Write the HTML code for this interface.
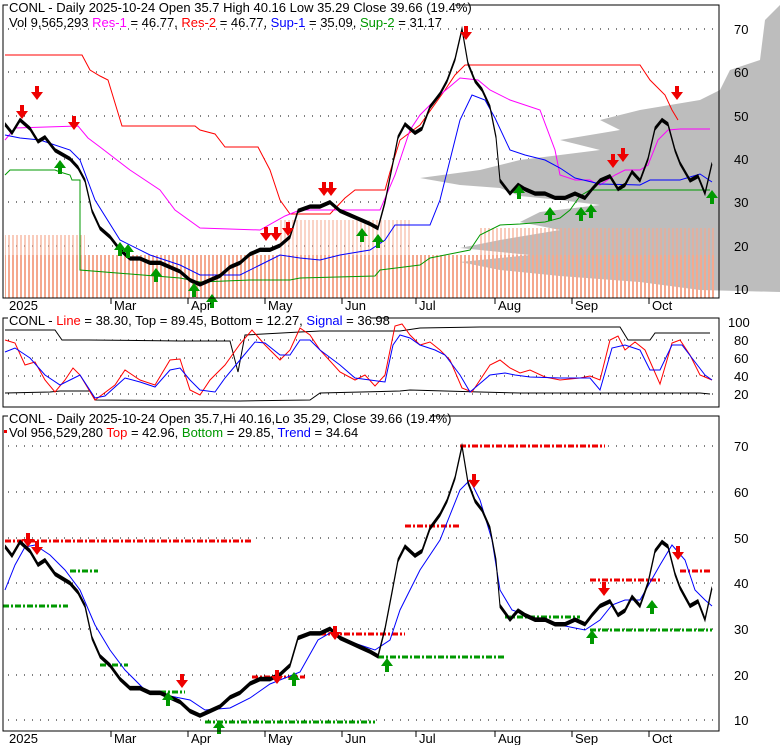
<!DOCTYPE html>
<html><head><meta charset="utf-8"><style>
body{margin:0;background:#fff;width:780px;height:745px;overflow:hidden;font-family:"Liberation Sans",sans-serif}
svg{position:absolute;left:0;top:0}
text{font-family:"Liberation Sans",sans-serif;font-size:13px}
.ax{font-size:13px;fill:#000}
</style></head><body>
<svg width="780" height="745" viewBox="0 0 780 745">
<defs>
<path id="px" d="M5,48 L12,46 L20,49 L30,47 L38,44 L45,45 L55,42 L70,40 L78,38 L85,35 L92,28 L100,24 L110,22 L120,19 L130,17 L140,17 L150,16 L160,16 L170,15 L180,14 L190,12 L200,11 L210,12 L220,13 L230,15 L240,16 L250,18 L260,19 L270,19 L280,20 L290,22 L298,28 L310,29 L320,29 L330,30 L340,28 L350,27 L360,26 L370,25 L378,24 L385,30 L392,38 L398,45 L405,48 L415,46 L422,47 L430,52 L440,55 L447,58 L455,63 L462,70 L468,62 L475,58 L482,56 L490,52 L496,45 L500,35 L510,32 L518,34 L525,33 L535,32 L545,32 L555,31 L565,31 L575,32 L585,31 L592,33 L600,35 L610,36 L618,33 L625,34 L632,37 L640,35 L648,40 L655,47 L662,49 L668,48 L675,42 L680,39 L690,35 L698,36 L705,32 L712,39"/>
<pattern id="vb" width="4" height="10" patternUnits="userSpaceOnUse"><rect width="2" height="10" fill="#f5a88e"/></pattern>
</defs>

<g stroke="#000" stroke-width="1" stroke-dasharray="1,7">
<line x1="8" y1="29" x2="718" y2="29"/><line x1="8" y1="72" x2="718" y2="72"/><line x1="8" y1="116" x2="718" y2="116"/><line x1="8" y1="159" x2="718" y2="159"/><line x1="8" y1="202" x2="718" y2="202"/><line x1="8" y1="246" x2="718" y2="246"/><line x1="8" y1="289" x2="718" y2="289"/>
</g>
<polygon fill="#bdbdbd" points="780,5 765,20 760,60 730,70 720,90 700,100 640,110 600,120 620,130 560,140 600,150 520,160 480,170 420,178 460,185 500,188 520,196 560,200 600,205 540,212 520,222 560,230 500,240 460,248 530,255 460,262 500,270 560,276 640,282 700,290 780,292"/>
<rect x="5" y="255" width="710" height="43" fill="url(#vb)"/>
<rect x="5" y="235" width="80" height="20" fill="url(#vb)" opacity=".6"/>
<rect x="280" y="220" width="130" height="35" fill="url(#vb)" opacity=".5"/>
<rect x="480" y="228" width="235" height="27" fill="url(#vb)" opacity=".6"/>
<polyline fill="none" stroke="#f00" points="5,55 82,55 90,70 100,76 108,80 122,126 195,126 200,130 215,134 225,147 258,147 270,170 280,200 290,214 330,214 345,198 355,190 385,190 390,172 400,140 420,125 445,90 455,75 465,65 640,65 650,80 665,95 672,110 678,120"/>
<polyline fill="none" stroke="#f0f" points="5,140 15,128 78,126 88,138 100,147 130,170 160,190 175,210 200,228 260,230 285,216 300,210 320,210 380,210 395,175 410,130 420,115 440,95 460,78 478,80 490,90 510,100 540,110 555,150 560,175 575,180 590,180 595,183 600,185 615,175 625,170 640,170 648,165 658,140 668,130 680,129 710,129"/>
<polyline fill="none" stroke="#00f" points="5,135 20,138 40,140 70,150 80,160 95,200 120,240 150,255 180,265 200,275 240,275 260,265 280,255 300,258 320,260 340,255 370,250 385,240 395,225 430,225 440,200 450,160 460,120 472,95 485,100 495,118 510,150 525,155 545,160 560,168 575,178 600,184 640,185 650,180 680,180 700,174 712,182"/>
<polyline fill="none" stroke="#090" points="5,175 10,170 55,170 60,172 70,175 72,180 80,180 80,270 180,278 200,282 250,280 290,280 300,278 375,276 380,270 420,265 430,258 470,250 480,235 500,225 520,224 545,222 560,218 570,210 580,196 590,190 650,190 710,190"/>
<use href="#px" transform="translate(0,332.1) scale(1,-4.33)" fill="none" stroke="#000" stroke-width="1"/>
<g fill="#e00">
<path d="M16,111h4v-6h4v6h4l-6,8z"/><path d="M31,92h4v-6h4v6h4l-6,8z"/><path d="M68,122h4v-6h4v6h4l-6,8z"/><path d="M260,233h4v-6h4v6h4l-6,8z"/><path d="M270,233h4v-6h4v6h4l-6,8z"/><path d="M282,228h4v-6h4v6h4l-6,8z"/><path d="M318,188h4v-6h4v6h4l-6,8z"/><path d="M325,188h4v-6h4v6h4l-6,8z"/><path d="M460,32h4v-6h4v6h4l-6,8z"/><path d="M607,160h4v-6h4v6h4l-6,8z"/><path d="M617,154h4v-6h4v6h4l-6,8z"/><path d="M671,92h4v-6h4v6h4l-6,8z"/>
</g>
<g fill="#090">
<path d="M54,168h4v6h4v-6h4l-6,-8z"/><path d="M114,250h4v6h4v-6h4l-6,-8z"/><path d="M122,252h4v6h4v-6h4l-6,-8z"/><path d="M150,276h4v6h4v-6h4l-6,-8z"/><path d="M188,291h4v6h4v-6h4l-6,-8z"/><path d="M206,302h4v6h4v-6h4l-6,-8z"/><path d="M356,236h4v6h4v-6h4l-6,-8z"/><path d="M372,242h4v6h4v-6h4l-6,-8z"/><path d="M513,193h4v6h4v-6h4l-6,-8z"/><path d="M544,215h4v6h4v-6h4l-6,-8z"/><path d="M575,215h4v6h4v-6h4l-6,-8z"/><path d="M585,212h4v6h4v-6h4l-6,-8z"/><path d="M706,198h4v6h4v-6h4l-6,-8z"/>
</g>
<polyline fill="none" stroke="#000" points="8,5 3,5 3,298 719,298 719,5 455,5"/>
<g class="ax"><text x="734" y="34">70</text><text x="734" y="77">60</text><text x="734" y="121">50</text><text x="734" y="164">40</text><text x="734" y="207">30</text><text x="734" y="251">20</text><text x="734" y="294">10</text></g>
<text x="9" y="12">CONL - Daily 2025-10-24 Open 35.7  High 40.16  Low 35.29  Close 39.66 (19.4%)</text>
<text x="9" y="27">Vol 9,565,293 <tspan fill="#f0f">Res-1</tspan> = 46.77, <tspan fill="#f00">Res-2</tspan> = 46.77, <tspan fill="#00f">Sup-1</tspan> = 35.09, <tspan fill="#090">Sup-2</tspan> = 31.17</text>
<g stroke="#000"><line x1="111" y1="298" x2="111" y2="304"/><line x1="188" y1="298" x2="188" y2="304"/><line x1="265" y1="298" x2="265" y2="304"/><line x1="342" y1="298" x2="342" y2="304"/><line x1="416" y1="298" x2="416" y2="304"/><line x1="495" y1="298" x2="495" y2="304"/><line x1="572" y1="298" x2="572" y2="304"/><line x1="649" y1="298" x2="649" y2="304"/></g>
<g class="ax"><text x="9" y="310">2025</text><text x="114" y="310">Mar</text><text x="191" y="310">Apr</text><text x="268" y="310">May</text><text x="345" y="310">Jun</text><text x="419" y="310">Jul</text><text x="498" y="310">Aug</text><text x="575" y="310">Sep</text><text x="652" y="310">Oct</text></g>

<g stroke="#000" stroke-dasharray="1,7"><line x1="8" y1="340" x2="718" y2="340"/><line x1="8" y1="358" x2="718" y2="358"/><line x1="8" y1="376" x2="718" y2="376"/><line x1="8" y1="394" x2="718" y2="394"/></g>
<polyline fill="none" stroke="#000" points="5,330 55,330 62,340 88,340 180,341 230,341 238,372 245,335 300,332 320,331 400,331 420,328 480,327 620,327 628,340 650,340 655,333 710,333"/>
<polyline fill="none" stroke="#000" points="5,393 50,392 60,391 90,391 95,400 240,401 310,400 320,393 400,391 410,390 480,392 520,393 620,393 700,393 710,394"/>
<polyline fill="none" stroke="#f00" points="5,340 15,343 25,365 35,362 45,380 55,392 65,380 73,368 80,375 95,400 115,385 125,370 140,380 155,385 170,360 180,359 190,390 200,395 210,380 225,365 240,344 252,330 265,345 280,360 290,350 300,328 310,335 320,350 340,372 355,380 365,375 375,386 385,375 395,326 402,324 410,335 420,345 430,342 440,350 450,360 462,388 472,392 490,365 500,360 510,368 520,373 530,370 545,377 560,380 580,378 590,376 600,380 610,340 618,336 625,350 635,342 645,350 660,384 672,343 680,340 690,355 700,375 712,380"/>
<polyline fill="none" stroke="#00f" points="5,352 15,348 30,358 45,375 60,385 70,380 80,375 95,398 105,396 125,378 140,382 155,387 170,370 180,368 190,380 200,390 215,392 225,378 240,360 255,342 265,343 280,355 290,355 300,340 310,340 320,350 340,365 355,378 370,380 385,382 393,345 400,335 410,338 420,345 435,350 445,355 460,375 470,392 490,375 505,373 515,375 530,377 560,378 590,378 600,390 612,348 625,345 640,350 650,370 660,370 672,345 682,345 695,362 705,375 712,380"/>
<polyline fill="none" stroke="#000" points="8,318 3,318 3,407 719,407 719,318 370,318"/>
<g class="ax"><text x="728" y="327">100</text><text x="734" y="345">80</text><text x="734" y="363">60</text><text x="734" y="381">40</text><text x="734" y="399">20</text></g>
<text x="9" y="325">CONL - <tspan fill="#f00">Line</tspan> = 38.30, Top = 89.45, Bottom = 12.27, <tspan fill="#00f">Signal</tspan> = 36.98</text>

<g stroke="#000" stroke-dasharray="1,7">
<line x1="8" y1="446" x2="718" y2="446"/><line x1="8" y1="492" x2="718" y2="492"/><line x1="8" y1="538" x2="718" y2="538"/><line x1="8" y1="583" x2="718" y2="583"/><line x1="8" y1="629" x2="718" y2="629"/><line x1="8" y1="675" x2="718" y2="675"/><line x1="8" y1="720" x2="718" y2="720"/>
</g>
<g stroke-width="3" stroke-dasharray="6,2,2,2" fill="none">
<line x1="5" y1="541" x2="252" y2="541" stroke="#e00"/><line x1="308" y1="634" x2="405" y2="634" stroke="#e00"/><line x1="252" y1="677" x2="305" y2="677" stroke="#e00"/><line x1="405" y1="526" x2="460" y2="526" stroke="#e00"/><line x1="460" y1="446" x2="605" y2="446" stroke="#e00"/><line x1="590" y1="580" x2="660" y2="580" stroke="#e00"/><line x1="680" y1="571" x2="712" y2="571" stroke="#e00"/>
<line x1="3" y1="606" x2="68" y2="606" stroke="#090"/><line x1="70" y1="571" x2="98" y2="571" stroke="#090"/><line x1="100" y1="665" x2="128" y2="665" stroke="#090"/><line x1="160" y1="692" x2="185" y2="692" stroke="#090"/><line x1="205" y1="722" x2="375" y2="722" stroke="#090"/><line x1="378" y1="657" x2="505" y2="657" stroke="#090"/><line x1="505" y1="617" x2="580" y2="617" stroke="#090"/><line x1="590" y1="630" x2="712" y2="630" stroke="#090"/>
</g>
<polyline fill="none" stroke="#00f" points="5,590 15,565 25,547 35,545 50,555 65,570 80,590 95,625 110,650 125,670 145,690 165,695 190,700 205,710 230,708 250,698 270,684 300,672 318,640 330,633 345,640 360,645 375,650 390,640 400,610 420,570 440,540 460,490 470,480 480,500 492,540 500,590 512,610 535,618 560,625 585,630 600,620 612,605 625,600 640,600 660,565 672,545 685,560 695,590 705,600 712,606"/>
<use href="#px" transform="translate(0,765.9) scale(1,-4.57)" fill="none" stroke="#000" stroke-width="1"/>
<g fill="#e00">
<path d="M22,539h4v-6h4v6h4l-6,8z"/><path d="M31,547h4v-6h4v6h4l-6,8z"/><path d="M176,680h4v-6h4v6h4l-6,8z"/><path d="M271,676h4v-6h4v6h4l-6,8z"/><path d="M329,632h4v-6h4v6h4l-6,8z"/><path d="M468,480h4v-6h4v6h4l-6,8z"/><path d="M598,588h4v-6h4v6h4l-6,8z"/><path d="M672,552h4v-6h4v6h4l-6,8z"/>
</g>
<g fill="#090">
<path d="M162,700h4v6h4v-6h4l-6,-8z"/><path d="M213,728h4v6h4v-6h4l-6,-8z"/><path d="M288,680h4v6h4v-6h4l-6,-8z"/><path d="M381,666h4v6h4v-6h4l-6,-8z"/><path d="M586,638h4v6h4v-6h4l-6,-8z"/><path d="M646,608h4v6h4v-6h4l-6,-8z"/>
</g>
<polyline fill="none" stroke="#000" points="8,416 3,416 3,731 719,731 719,416 430,416"/>
<g class="ax"><text x="734" y="451">70</text><text x="734" y="497">60</text><text x="734" y="543">50</text><text x="734" y="588">40</text><text x="734" y="634">30</text><text x="734" y="680">20</text><text x="734" y="725">10</text></g>
<text x="9" y="423">CONL - Daily 2025-10-24 Open 35.7,Hi 40.16,Lo 35.29, Close 39.66 (19.4%)</text>
<rect x="4" y="430" width="3" height="3" fill="#e00"/>
<text x="9" y="437">Vol 956,529,280 <tspan fill="#f00">Top</tspan> = 42.96, <tspan fill="#090">Bottom</tspan> = 29.85, <tspan fill="#00f">Trend</tspan> = 34.64</text>
<g stroke="#000"><line x1="111" y1="731" x2="111" y2="737"/><line x1="188" y1="731" x2="188" y2="737"/><line x1="265" y1="731" x2="265" y2="737"/><line x1="342" y1="731" x2="342" y2="737"/><line x1="416" y1="731" x2="416" y2="737"/><line x1="495" y1="731" x2="495" y2="737"/><line x1="572" y1="731" x2="572" y2="737"/><line x1="649" y1="731" x2="649" y2="737"/></g>
<g class="ax"><text x="9" y="743">2025</text><text x="114" y="743">Mar</text><text x="191" y="743">Apr</text><text x="268" y="743">May</text><text x="345" y="743">Jun</text><text x="419" y="743">Jul</text><text x="498" y="743">Aug</text><text x="575" y="743">Sep</text><text x="652" y="743">Oct</text></g>
</svg>
</body></html>
